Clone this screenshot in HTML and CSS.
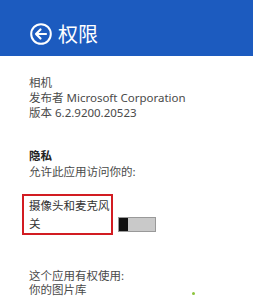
FILE: index.html
```html
<!DOCTYPE html>
<html>
<head>
    <title>权限</title>
    <link rel="stylesheet" href="styles.css">
</head>
<body>
    <div class="header">
        <svg class="back" width="22" height="22" viewBox="0 0 22 22">
            <circle cx="11" cy="11" r="9.8" fill="none" stroke="#fff" stroke-width="2"/>
            <path d="M6 11 L10.5 6.5 M6 11 L10.5 15.5 M6 11 H16" fill="none" stroke="#fff" stroke-width="2.2" stroke-linecap="round"/>
        </svg>
        <h1>权限</h1>
    </div>
    <div class="content">
        <div class="info">
            <div>相机</div>
            <div>发布者 Microsoft Corporation</div>
            <div>版本 6.2.9200.20523</div>
        </div>
        <div class="privacy">
            <div class="title">隐私</div>
            <div>允许此应用访问你的:</div>
        </div>
        <div class="setting">
            <div class="box">
                <div class="name">摄像头和麦克风</div>
                <div class="state">关</div>
            </div>
            <div class="toggle"><span class="thumb"></span></div>
        </div>
        <div class="rights">
            <div>这个应用有权使用:</div>
            <div>你的图片库</div>
        </div>
    </div>
    <span class="dot"></span>
</body>
</html>
```

FILE: styles.css
```css
body {
    margin: 0;
    background: #fff;
    font-family: "Noto Sans", "Noto Sans CJK SC", sans-serif;
    font-size: 11.5px;
    color: #4a4a4a;
    position: relative;
    height: 296px;
    overflow: hidden;
}
.header {
    height: 56px;
    box-sizing: border-box;
    background: #1c5bbf;
    display: flex;
    align-items: center;
    padding: 12px 0 0 30px;
    gap: 6px;
}
.header h1 {
    margin: 0;
    font-family: "Noto Sans CJK SC", sans-serif;
    font-weight: normal;
    font-size: 20px;
    color: #fff;
    line-height: 22px;
}
.content {
    padding-left: 29px;
}
.info {
    margin-top: 19px;
    line-height: 15px;
}
.privacy {
    margin-top: 28px;
    line-height: 16px;
}
.privacy .title {
    font-weight: bold;
    color: #222;
}
.setting {
    margin-top: 14px;
    margin-left: -7px;
    display: flex;
    align-items: flex-end;
    gap: 5px;
}
.box {
    width: 91px;
    border: 2px solid #d21c22;
    padding-left: 5px;
    box-sizing: border-box;
    color: #333;
}
.box .name {
    line-height: 19px;
}
.box .state {
    line-height: 18px;
}
.toggle {
    width: 38px;
    height: 15px;
    box-sizing: border-box;
    border: 1px solid #999;
    background: #c9c9c9;
    margin-bottom: 3px;
    display: flex;
}
.thumb {
    width: 9px;
    background: #111;
}
.rights {
    margin-top: 34px;
    line-height: 14px;
}
.dot {
    position: absolute;
    left: 192px;
    top: 292px;
    width: 3px;
    height: 3px;
    border-radius: 50%;
    background: #8cc43c;
}
```
